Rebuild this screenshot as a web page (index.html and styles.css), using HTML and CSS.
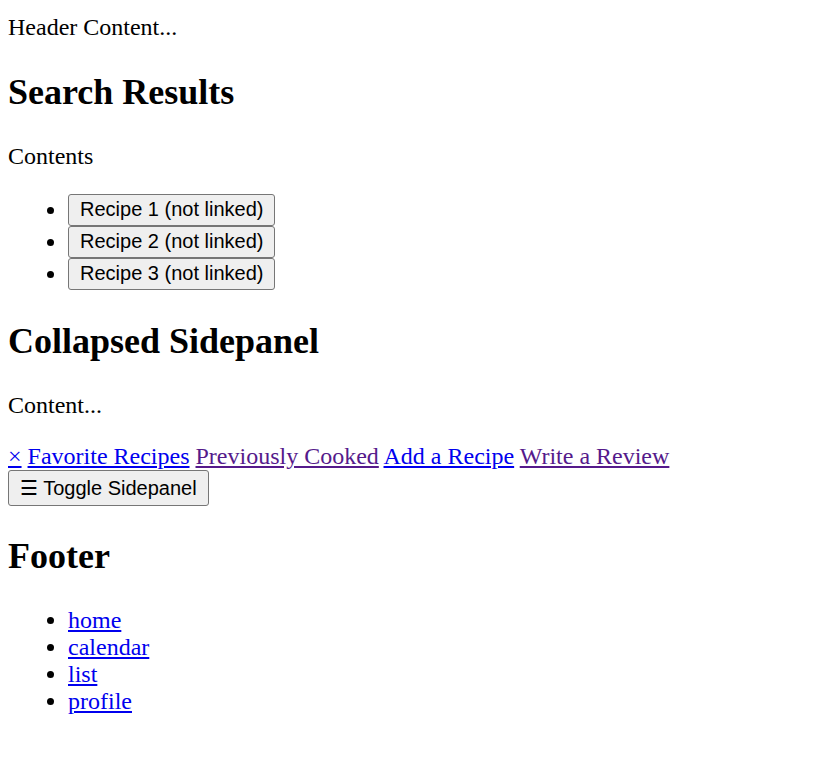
FILE: index.html
```html
<!DOCTYPE html>
<html>
<head>
<meta charset="utf-8">
<link rel="stylesheet" href="styles.css">
</head>
<body>
<header class="site-header">Header Content...</header>
<main>
<h2>Search Results</h2>
<p>Contents</p>
<ul class="list recipes">
<li><button class="recipe">Recipe 1 (not linked)</button></li>
<li><button class="recipe">Recipe 2 (not linked)</button></li>
<li><button class="recipe">Recipe 3 (not linked)</button></li>
</ul>
<h2>Collapsed Sidepanel</h2>
<p>Content...</p>
<div class="sidepanel">
<a href="#" class="closebtn">×</a>
<a href="#">Favorite Recipes</a>
<a href="#" class="visited">Previously Cooked</a>
<a href="#">Add a Recipe</a>
<a href="#" class="visited">Write a Review</a>
</div>
<div class="toggle-row"><button class="toggle">☰ Toggle Sidepanel</button></div>
</main>
<footer>
<h2>Footer</h2>
<ul class="list">
<li><a href="#">home</a></li>
<li><a href="#">calendar</a></li>
<li><a href="#">list</a></li>
<li><a href="#">profile</a></li>
</ul>
</footer>
</body>
</html>
```
FILE: styles.css
```css
body {
  margin: 8px;
  font-family: "Liberation Serif", serif;
  font-size: 24px;
  color: #000;
}
.site-header { padding-top: 6px; }
a { color: #0000ee; }
a.visited { color: #551a8b; }
.list { padding-left: 60px; }
.recipes li { height: 32px; line-height: 32px; }
button {
  font-family: "Liberation Sans", Arial, sans-serif;
  font-size: 20px;
  line-height: normal;
  color: #000;
  background: #efefef;
  border: 1px solid #767676;
  border-radius: 3px;
  padding: 0 11px;
  box-sizing: border-box;
}
.recipe { height: 32px; vertical-align: top; }
.toggle-row { display: flex; }
.toggle { height: 36px; }
```
